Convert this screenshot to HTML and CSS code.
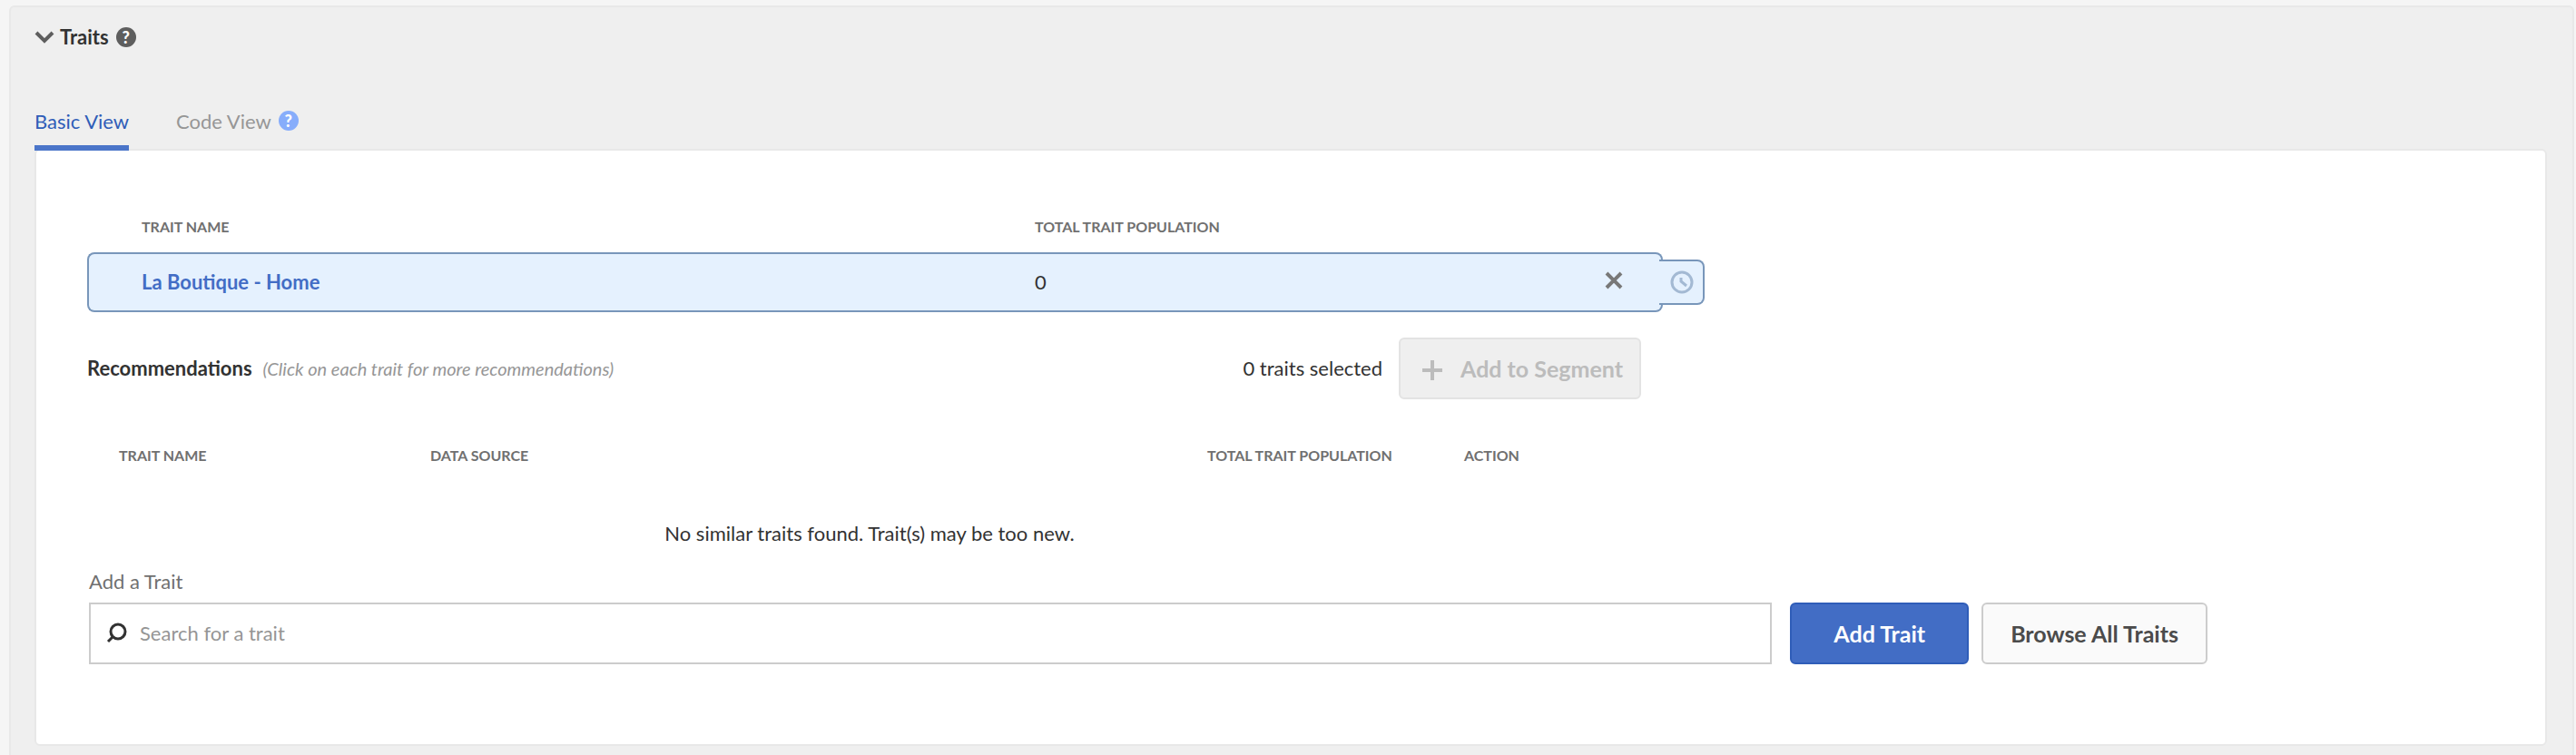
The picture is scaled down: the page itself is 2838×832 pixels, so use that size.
FILE: index.html
```html
<!DOCTYPE html>
<html lang="en">
<head>
<meta charset="utf-8">
<title>Traits</title>
<link rel="stylesheet" href="styles.css">
</head>
<body>
<main class="section">
  <header class="section-head">
    <button class="icon-btn" type="button" aria-label="Collapse">
      <svg class="chevron" viewBox="0 0 22 14"><path d="M2 2l9 9 9-9"/></svg>
    </button>
    <h1 class="title">Traits</h1>
    <button class="help" type="button" aria-label="Help">?</button>
  </header>

  <nav class="tabs">
    <a class="tab tab-active" href="#basic">Basic View</a>
    <a class="tab" href="#code">Code View</a>
    <button class="help help-blue" type="button" aria-label="About code view">?</button>
  </nav>

  <section class="panel" id="basic">
    <table class="grid selected">
      <colgroup><col class="s-name"><col><col class="s-act"></colgroup>
      <thead>
        <tr><th>Trait Name</th><th>Total Trait Population</th><th></th></tr>
      </thead>
      <tbody>
        <tr>
          <td><a class="trait-link" href="#trait">La Boutique - Home</a></td>
          <td>0</td>
          <td class="actions">
            <button class="icon-btn" type="button" aria-label="Remove">
              <svg class="cross" viewBox="0 0 20 20"><path d="M2 2l16 16M18 2L2 18"/></svg>
            </button>
            <button class="recency" type="button" aria-label="Recency and frequency">
              <svg class="clock" viewBox="0 0 26 26"><circle cx="13" cy="13" r="11"/><path d="M12 8v4l6 5"/></svg>
            </button>
          </td>
        </tr>
      </tbody>
    </table>

    <div class="reco-head">
      <h2 class="reco-title">Recommendations</h2>
      <em class="hint">(Click on each trait for more recommendations)</em>
      <span class="count">0 traits selected</span>
      <button class="btn btn-disabled" type="button" disabled>
        <svg class="plus" viewBox="0 0 22 26"><path d="M11 4v22M0 15h22"/></svg>
        Add to Segment
      </button>
    </div>

    <table class="grid reco">
      <colgroup><col class="r-name"><col class="r-source"><col class="r-pop"><col></colgroup>
      <thead>
        <tr><th>Trait Name</th><th>Data Source</th><th>Total Trait Population</th><th>Action</th></tr>
      </thead>
      <tbody>
        <tr><td class="empty" colspan="4">No similar traits found. Trait(s) may be too new.</td></tr>
      </tbody>
    </table>

    <form class="add">
      <label class="label" for="search">Add a Trait</label>
      <div class="add-row">
        <div class="search">
          <svg class="lens" viewBox="0 0 24 24"><circle cx="14" cy="10" r="8"/><path d="M8 16l-5 5"/></svg>
          <input class="search-input" id="search" type="text" placeholder="Search for a trait">
        </div>
        <button class="btn btn-primary" type="button">Add Trait</button>
        <button class="btn btn-browse" type="button">Browse All Traits</button>
      </div>
    </form>
  </section>
</main>
</body>
</html>
```
FILE: styles.css
```css
* { box-sizing: border-box; }

body {
  margin: 0;
  padding: 6px 2px 0 10px;
  background: #f5f5f5;
  color: #323232;
  font: 22px/30px Lato, "Open Sans", sans-serif;
}

button, input { font: inherit; color: inherit; }
h1, h2 { margin: 0; font-size: 22px; line-height: 30px; }
svg { display: block; fill: none; stroke: currentColor; }

.section {
  min-height: calc(100vh - 6px);
  padding: 16px 28px 12px 26px;
  background: #efefef;
  border: 2px solid #e8e8e8;
  border-bottom: 0;
  border-radius: 6px 6px 0 0;
}

.section-head { display: flex; align-items: center; height: 34px; }
.icon-btn { padding: 0; border: 0; background: none; cursor: pointer; }
.chevron { width: 22px; height: 14px; color: #5e5e5e; stroke-width: 4; }
.title { margin: 0 8px 0 6px; }

.help {
  width: 22px;
  height: 22px;
  padding: 0;
  border: 0;
  border-radius: 50%;
  background: #5e5e5e;
  color: #fff;
  font-size: 18px;
  font-weight: 900;
  line-height: 22px;
  text-align: center;
}
.help-blue { margin: 16px 0 0 -44px; background: #87adfb; }

.tabs { display: flex; align-items: flex-start; gap: 52px; height: 106px; padding-top: 48px; }
.tab { height: 60px; padding-top: 13px; color: #969696; text-decoration: none; }
.tab-active { z-index: 1; color: #2f5db8; border-bottom: 6px solid #4b75c9; }

.panel {
  padding: 64px 56px 84px;
  background: #fff;
  border: 2px solid #e8e8e8;
  border-radius: 6px;
}

.grid { width: 100%; table-layout: fixed; border-collapse: separate; border-spacing: 0; }
.grid th {
  padding: 0;
  color: #707070;
  font-size: 16px;
  line-height: 24px;
  text-align: left;
  text-transform: uppercase;
}
.grid td { padding: 0; }

.selected { max-width: 1736px; }
.s-name { width: 1044px; }
.s-act { width: 64px; }
.selected th { height: 48px; padding-top: 8px; vertical-align: top; }
.selected th:first-child { padding-left: 60px; }
.selected td {
  height: 66px;
  background: #e5f1fe;
  border: solid #7896ba;
  border-width: 2px 0;
}
.selected td:first-child { padding-left: 58px; border-left-width: 2px; border-radius: 8px 0 0 8px; }
.selected td:last-child { border-right-width: 2px; border-radius: 0 8px 8px 0; }
.trait-link { color: #426dc5; font-weight: 700; text-decoration: none; }
.actions { position: relative; }
.cross { width: 20px; height: 20px; color: #787878; stroke-width: 4; }
.recency {
  position: absolute;
  top: 6px;
  left: calc(100% - 2px);
  width: 50px;
  height: 50px;
  padding: 0 0 0 12px;
  background: #e5f1fe;
  border: 2px solid #7896ba;
  border-left: 0;
  border-radius: 0 8px 8px 0;
}
.clock { width: 26px; height: 26px; color: #a3b9d3; stroke-width: 3; }

.reco-head { display: flex; align-items: center; max-width: 1712px; margin-top: 28px; }
.hint { margin-left: 12px; color: #969696; font-size: 20px; }
.count { margin: 0 18px 0 auto; }

.btn {
  display: flex;
  align-items: center;
  justify-content: center;
  height: 68px;
  padding: 0 26px;
  background: #fafafa;
  border: 2px solid #ccc;
  border-radius: 6px;
  color: #4b4b4b;
  font-size: 25px;
  font-weight: 700;
  white-space: nowrap;
}
.btn-primary { padding: 0 46px; background: #426dc5; border-color: #2f5db8; color: #fff; }
.btn-browse { padding: 0 30px; }
.btn-disabled { gap: 20px; padding: 0 18px 0 24px; background: #efefef; border-color: #e3e3e3; color: #bcbcbc; }
.plus { width: 22px; height: 26px; stroke-width: 4; }

.reco { max-width: 1724px; margin-top: 50px; }
.r-name { width: 378px; }
.r-source { width: 856px; }
.r-pop { width: 283px; }
.reco th { height: 72px; vertical-align: top; }
.reco th:first-child { padding-left: 35px; }
.empty { height: 52px; text-align: center; }

.add { max-width: 2336px; margin-top: 12px; padding-left: 2px; }
.label { color: #707070; }
.add-row { display: flex; gap: 14px; margin-top: 8px; }
.search {
  display: flex;
  align-items: center;
  flex: 1;
  gap: 14px;
  margin-right: 6px;
  padding: 0 16px;
  border: 2px solid #ccc;
}
.lens { width: 24px; height: 24px; stroke-width: 3; }
.search-input { flex: 1; min-width: 0; padding: 0; border: 0; outline: 0; background: none; }
.search-input::placeholder { color: #959595; }

@media (min-width: 1200px) {
  .panel { padding-bottom: 88px; }
}
```
